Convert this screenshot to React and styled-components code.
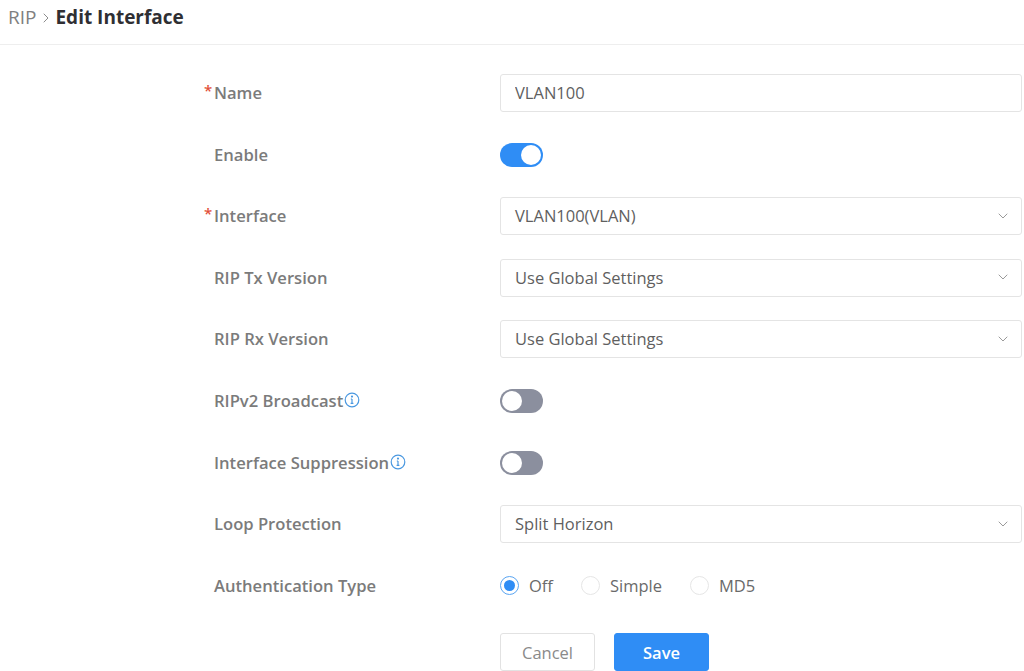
import React from "react";
import styled, {createGlobalStyle} from "styled-components";
import {ChevronDown, ChevronRight} from "lucide-react";

const GlobalStyle = createGlobalStyle`
  html, body {
    margin: 0;
    height: 100%;
    background: #fff;
    overflow: hidden;
  }
  body {
    font-family: "Open Sans", "Liberation Sans", sans-serif;
    color: #6e6e6e;
  }
`;

const Page = styled.div`
  width: 1024px;
  height: 671px;
  overflow: hidden;
`;

const Header = styled.header`
  height: 44px;
  display: flex;
  align-items: center;
  padding-left: 8px;
  border-bottom: 1px solid #eeeeee;
`;

const Crumb = styled.span`
  font-size: 19px;
  line-height: 34px;
  margin-top: -10px;
  color: #808080;
`;

const CrumbCurrent = styled(Crumb)`
  font-weight: 700;
  color: #2f2f33;
`;

const CrumbArrow = styled(ChevronRight)`
  width: 16px;
  height: 16px;
  margin: -8px 1px 0 2px;
  color: #8c8c8c;
`;

const Form = styled.form`
  display: flex;
  flex-direction: column;
  gap: 23.6px;
  padding: 29px 2px 0 214px;
`;

const Row = styled.div`
  display: grid;
  grid-template-columns: 286px 1fr;
  align-items: center;
  height: 38px;
`;

const Label = styled.label`
  position: relative;
  display: flex;
  align-items: center;
  gap: 1px;
  padding-bottom: 1px;
  font-size: 16.6px;
  font-weight: 600;
  color: #7b7b7b;
`;

const Required = styled.span`
  position: absolute;
  left: -10px;
  top: -1px;
  font-size: 15px;
  font-weight: 600;
  color: #e2503a;
`;

const TextInput = styled.input`
  height: 38px;
  width: 100%;
  box-sizing: border-box;
  padding: 0 14px 1px;
  border: 1px solid #e4e4e4;
  border-radius: 3px;
  outline: none;
  font: 400 16.5px "Open Sans", sans-serif;
  color: #5f5f5f;
`;

const Select = styled.div`
  height: 38px;
  box-sizing: border-box;
  display: flex;
  align-items: center;
  justify-content: space-between;
  padding: 0 10px 1px 14px;
  border: 1px solid #e4e4e4;
  border-radius: 3px;
  font-size: 16.5px;
  color: #5f5f5f;
`;

const SelectArrow = styled(ChevronDown)`
  width: 16px;
  height: 16px;
  color: #9a9a9a;
`;

const Switch = styled.div`
  position: relative;
  width: 43px;
  height: 24px;
  border-radius: 12px;
  background: ${(p) => (p.$on ? "#2f8df5" : "#8b8f9e")};
`;

const Knob = styled.span`
  position: absolute;
  top: 2px;
  left: ${(p) => (p.$on ? "21px" : "2px")};
  width: 20px;
  height: 20px;
  border-radius: 50%;
  background: #fff;
`;

const RadioGroup = styled.div`
  display: flex;
  align-items: center;
  gap: 28px;
`;

const RadioOption = styled.div`
  display: flex;
  align-items: center;
  gap: 10px;
  font-size: 16.5px;
  color: #6a6a6a;
`;

const RadioDot = styled.span`
  width: 19px;
  height: 19px;
  box-sizing: border-box;
  border-radius: 50%;
  border: 1px solid ${(p) => (p.$checked ? "#5aa5f2" : "#e6e6e6")};
  display: flex;
  align-items: center;
  justify-content: center;
  &::after {
    content: "";
    display: ${(p) => (p.$checked ? "block" : "none")};
    width: 11px;
    height: 11px;
    border-radius: 50%;
    background: #2f8df5;
  }
`;

const Actions = styled.div`
  display: flex;
  gap: 19px;
  padding-left: 286px;
  margin-top: 5px;
`;

const Button = styled.button`
  width: 95px;
  height: 38px;
  border-radius: 3px;
  border: 1px solid ${(p) => (p.$primary ? "#2f8df5" : "#e2e2e2")};
  background: ${(p) => (p.$primary ? "#2f8df5" : "#fff")};
  color: ${(p) => (p.$primary ? "#fff" : "#8a8a8a")};
  font: ${(p) => (p.$primary ? 600 : 400)} 16.5px "Open Sans", sans-serif;
`;

function InfoIcon() {
  return (
    <svg width="16" height="16" viewBox="0 0 16 16" fill="none" stroke="#4a98e0" strokeWidth="1.2">
      <circle cx="8" cy="8" r="6.8" />
      <path d="M8 7v4.4M6.6 11.4h2.8M6.8 7H8" />
      <circle cx="8" cy="4.6" r="0.5" fill="#4a98e0" />
    </svg>
  );
}

function Toggle({on}) {
  return (
    <Switch $on={on}>
      <Knob $on={on} />
    </Switch>
  );
}

function SelectField({value}) {
  return (
    <Select>
      {value}
      <SelectArrow strokeWidth={1.5} />
    </Select>
  );
}

export default function App() {
  return (
    <Page>
      <GlobalStyle />
      <Header>
        <Crumb>RIP</Crumb>
        <CrumbArrow strokeWidth={1.5} />
        <CrumbCurrent>Edit Interface</CrumbCurrent>
      </Header>
      <Form>
        <Row>
          <Label>
            <Required>*</Required>Name
          </Label>
          <TextInput defaultValue="VLAN100" />
        </Row>
        <Row>
          <Label>Enable</Label>
          <Toggle on />
        </Row>
        <Row>
          <Label>
            <Required>*</Required>Interface
          </Label>
          <SelectField value="VLAN100(VLAN)" />
        </Row>
        <Row>
          <Label>RIP Tx Version</Label>
          <SelectField value="Use Global Settings" />
        </Row>
        <Row>
          <Label>RIP Rx Version</Label>
          <SelectField value="Use Global Settings" />
        </Row>
        <Row>
          <Label>
            RIPv2 Broadcast
            <InfoIcon />
          </Label>
          <Toggle />
        </Row>
        <Row>
          <Label>
            Interface Suppression
            <InfoIcon />
          </Label>
          <Toggle />
        </Row>
        <Row>
          <Label>Loop Protection</Label>
          <SelectField value="Split Horizon" />
        </Row>
        <Row>
          <Label>Authentication Type</Label>
          <RadioGroup>
            <RadioOption>
              <RadioDot $checked />
              Off
            </RadioOption>
            <RadioOption>
              <RadioDot />
              Simple
            </RadioOption>
            <RadioOption>
              <RadioDot />
              MD5
            </RadioOption>
          </RadioGroup>
        </Row>
        <Actions>
          <Button type="button">Cancel</Button>
          <Button type="button" $primary>
            Save
          </Button>
        </Actions>
      </Form>
    </Page>
  );
}
